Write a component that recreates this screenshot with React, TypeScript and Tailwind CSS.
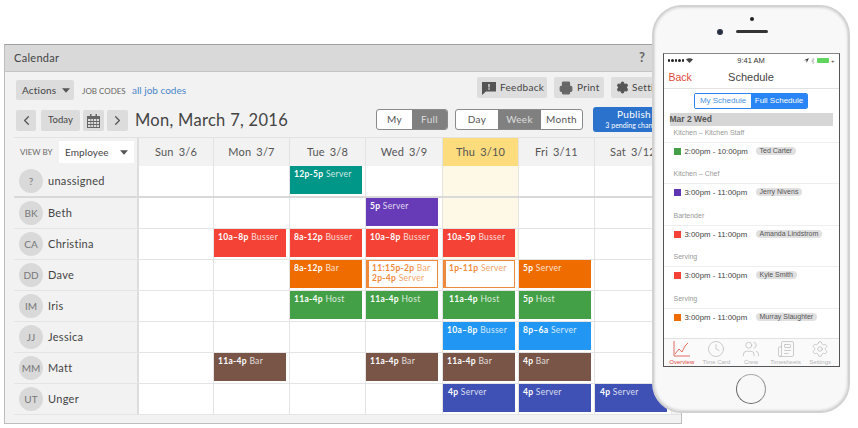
import { ChevronLeft, ChevronRight, Clock, Newspaper, Printer, Settings, Users } from "lucide-react";

type Shift = {
  col: number;
  lines: [string, string][];
  color: string;
  outline?: boolean;
  pad?: string;
};

type Row = {
  initials: string;
  name: string;
  shifts: Shift[];
};

const days = ["Sun 3/6", "Mon 3/7", "Tue 3/8", "Wed 3/9", "Thu 3/10", "Fri 3/11", "Sat 3/12"];
const gridCols = "grid grid-cols-[125px_75px_76px_76px_77px_76px_76px_77px]";

const red = "bg-[#f44336]";
const orange = "bg-[#ef6c00]";
const green = "bg-[#43a047]";
const blue = "bg-[#2196f3]";
const brown = "bg-[#795548]";
const indigo = "bg-[#3f51b5]";

const rows: Row[] = [
  {
    initials: "?",
    name: "unassigned",
    shifts: [{ col: 2, lines: [["12p-5p", "Server"]], color: "bg-[#009688]" }],
  },
  {
    initials: "BK",
    name: "Beth",
    shifts: [{ col: 3, lines: [["5p", "Server"]], color: "bg-[#673ab7]" }],
  },
  {
    initials: "CA",
    name: "Christina",
    shifts: [
      { col: 1, lines: [["10a–8p", "Busser"]], color: red },
      { col: 2, lines: [["8a-12p", "Busser"]], color: red },
      { col: 3, lines: [["10a–8p", "Busser"]], color: red },
      { col: 4, lines: [["10a-5p", "Busser"]], color: red },
    ],
  },
  {
    initials: "DD",
    name: "Dave",
    shifts: [
      { col: 2, lines: [["8a-12p", "Bar"]], color: orange },
      { col: 3, lines: [["11:15p-2p", "Bar"], ["2p-4p", "Server"]], color: orange, outline: true },
      { col: 4, lines: [["1p-11p", "Server"]], color: orange, outline: true },
      { col: 5, lines: [["5p", "Server"]], color: orange },
    ],
  },
  {
    initials: "IM",
    name: "Iris",
    shifts: [
      { col: 2, lines: [["11a-4p", "Host"]], color: green },
      { col: 3, lines: [["11a-4p", "Host"]], color: green },
      { col: 4, lines: [["11a-4p", "Host"]], color: green, pad: "pl-[6px]" },
      { col: 5, lines: [["5p", "Host"]], color: green },
    ],
  },
  {
    initials: "JJ",
    name: "Jessica",
    shifts: [
      { col: 4, lines: [["10a–8p", "Busser"]], color: blue },
      { col: 5, lines: [["8p–6a", "Server"]], color: blue },
    ],
  },
  {
    initials: "MM",
    name: "Matt",
    shifts: [
      { col: 1, lines: [["11a-4p", "Bar"]], color: brown },
      { col: 3, lines: [["11a-4p", "Bar"]], color: brown },
      { col: 4, lines: [["11a-4p", "Bar"]], color: brown },
      { col: 5, lines: [["4p", "Bar"]], color: brown },
    ],
  },
  {
    initials: "UT",
    name: "Unger",
    shifts: [
      { col: 4, lines: [["4p", "Server"]], color: indigo, pad: "pl-[5px]" },
      { col: 5, lines: [["4p", "Server"]], color: indigo },
      { col: 6, lines: [["4p", "Server"]], color: indigo, pad: "pl-[5px]" },
    ],
  },
];

const phoneShifts = [
  { group: "Kitchen – Kitchen Staff", color: "bg-[#43a047]", time: "2:00pm - 10:00pm", who: "Ted Carter" },
  { group: "Kitchen – Chef", color: "bg-[#5e35b1]", time: "3:00pm - 11:00pm", who: "Jerry Nivens" },
  { group: "Bartender", color: "bg-[#f44336]", time: "3:00pm - 11:00pm", who: "Amanda Lindstrom" },
  { group: "Serving", color: "bg-[#f44336]", time: "3:00pm - 11:00pm", who: "Kyle Smith" },
  { group: "Serving", color: "bg-[#ef6c00]", time: "3:00pm - 11:00pm", who: "Murray Slaughter" },
];

function Caret({ className }: { className: string }) {
  return (
    <svg width="8" height="5" viewBox="0 0 9 5" className={className}>
      <path d="M0 0h9L4.5 5z" fill="#555" />
    </svg>
  );
}

function ShiftBlock({ shift }: { shift: Shift }) {
  if (shift.outline) {
    return (
      <div className="h-[28px] w-[72px] border border-l-[3px] border-[#ef8a3c] bg-white pl-[3px] pt-[2px] text-[8.5px] leading-[10px] tracking-[0.3px] text-[#ef8a3c] whitespace-nowrap overflow-hidden">
        {shift.lines.map(([time, role]) => (
          <div key={time}>
            <span className="font-bold">{time}</span> <span className="opacity-80">{role}</span>
          </div>
        ))}
      </div>
    );
  }
  const [time, role] = shift.lines[0];
  return (
    <div className={`h-[28px] w-[72px] ${shift.color} ${shift.pad ?? "pl-[4px]"} pt-[3px] text-[8.5px] leading-[11px] tracking-[0.3px] text-white whitespace-nowrap overflow-hidden`}>
      <span className="font-bold">{time}</span> <span className="opacity-80">{role}</span>
    </div>
  );
}

function Segmented({ items, active, widths }: { items: string[]; active: string; widths: string[] }) {
  return (
    <div className="mt-[2px] flex h-[21px] shrink-0 overflow-hidden rounded-[3px] border border-[#8a8a8a] bg-white text-[10px] tracking-[0.3px] text-[#555]">
      {items.map((item, i) => (
        <div
          key={item}
          className={`flex items-center justify-center ${widths[i]} ${item === active ? "bg-[#808080] text-[#ddd]" : ""}`}
        >
          {item}
        </div>
      ))}
    </div>
  );
}

function Calendar() {
  return (
    <div className="ml-[4px] mt-[44px] h-[380px] w-[678px] overflow-hidden border border-[#bdbdbd] border-t-[#a0a0a0] bg-[#f2f2f2] font-['Lato',sans-serif]">
      <div className="flex h-[27px] items-center border-b border-[#c4c4c4] bg-[#d9d9d9] pl-[9px] text-[11px] tracking-[0.3px] text-[#444]">
        <span className="w-[625px] shrink-0">Calendar</span>
        <span className="text-[13px] font-bold text-[#666]">?</span>
      </div>

      <div className="flex h-[28px] items-start pl-[11px] pt-[5px] whitespace-nowrap">
        <div className="mt-[3px] flex h-[20px] w-[58px] shrink-0 items-center rounded-[2px] bg-[#dcdcdc] pl-[6px] text-[10px] tracking-[0.2px] text-[#444]">
          Actions
          <Caret className="ml-[6px]" />
        </div>
        <div className="ml-[8px] mt-[8px] w-[42px] shrink-0 text-[8px] text-[#666]">JOB CODES</div>
        <div className="ml-[8px] mt-[6px] w-[54px] shrink-0 text-[10px] text-[#4a86c8]">all job codes</div>
        <div className="ml-[291px] flex h-[21px] w-[70px] shrink-0 items-center rounded-[2px] bg-[#dedede] pl-[5px] text-[10px] tracking-[0.3px] text-[#444]">
          <svg width="14" height="14" viewBox="0 0 14 14" className="mr-[4px]">
            <path d="M0 1h14v9.500H4L0 14z" fill="#555" />
            <path d="M6.300 3h1.400v3.500H6.300zM6.300 7.300h1.400v1.400H6.300z" fill="#dedede" />
          </svg>
          Feedback
        </div>
        <div className="ml-[7px] flex h-[21px] w-[50px] shrink-0 items-center rounded-[2px] bg-[#dedede] pl-[5px] text-[10px] tracking-[0.3px] text-[#444]">
          <Printer size={14} className="mr-[4px] fill-[#666] text-[#666]" />
          Print
        </div>
        <div className="ml-[7px] flex h-[21px] w-[70px] shrink-0 items-center rounded-[2px] bg-[#dedede] pl-[5px] text-[10px] tracking-[0.3px] text-[#444]">
          <Settings size={13} className="mr-[3px] fill-[#555] text-[#555]" />
          Settings
        </div>
      </div>

      <div className="flex h-[37px] items-start pl-[11px] pt-[7px] whitespace-nowrap">
        <div className="mt-[3px] flex h-[21px] w-[20px] shrink-0 items-center justify-center rounded-[2px] bg-[#dcdcdc]">
          <ChevronLeft size={15} className="text-[#555]" />
        </div>
        <div className="ml-[5px] mt-[3px] flex h-[21px] w-[39px] shrink-0 items-center justify-center rounded-[2px] bg-[#dcdcdc] text-[9.5px] tracking-[0.1px] text-[#444]">
          Today
        </div>
        <div className="ml-[3px] mt-[3px] flex h-[21px] w-[21px] shrink-0 items-center justify-center rounded-[2px] bg-[#dcdcdc]">
          <svg width="13" height="14" viewBox="0 0 13 14">
            <path d="M0 2h13v12H0z" fill="#666" />
            <path d="M3 0h1.500v2H3zM8.500 0H10v2H8.500z" fill="#666" />
            <path d="M1 5h2.500v2H1zM4.200 5h2v2h-2zM7 5h2v2H7zM9.700 5H12v2H9.700zM1 8h2.500v2H1zM4.200 8h2v2h-2zM7 8h2v2H7zM9.700 8H12v2H9.700zM1 11h2.500v2H1zM4.200 11h2v2h-2zM7 11h2v2H7zM9.700 11H12v2H9.700z" fill="#dcdcdc" />
          </svg>
        </div>
        <div className="ml-[3px] mt-[3px] flex h-[21px] w-[21px] shrink-0 items-center justify-center rounded-[2px] bg-[#dcdcdc]">
          <ChevronRight size={15} className="text-[#555]" />
        </div>
        <div className="ml-[7px] mt-[1px] w-[241px] shrink-0 text-[16.5px] leading-[24px] tracking-[0.3px] text-[#444]">
          Mon, March 7, 2016
        </div>
        <Segmented items={["My", "Full"]} active="Full" widths={["w-[35px]", "w-[35px]"]} />
        <div className="w-[7px] shrink-0" />
        <Segmented items={["Day", "Week", "Month"]} active="Week" widths={["w-[42px]", "w-[43px]", "w-[41px]"]} />
        <div className="ml-[10px] flex h-[25px] w-[82px] shrink-0 flex-col items-center rounded-[3px] bg-[#2a72cc] pt-[1px] text-white">
          <span className="text-[10px] leading-[13px] tracking-[0.3px]">Publish</span>
          <span className="text-[7px] leading-[9px]">3 pending changes</span>
        </div>
      </div>

      <div className="ml-[9px]">
        <div className={`${gridCols} h-[29px] border-t border-[#e2e2e2]`}>
          <div className="flex items-center border-r-2 border-[#dedede] pl-[6px]">
            <span className="w-[32px] shrink-0 text-[8px] whitespace-nowrap text-[#666]">VIEW BY</span>
            <div className="ml-[7px] flex h-[22px] w-[75px] shrink-0 items-center justify-between bg-white pl-[6px] pr-[6px] text-[10px] tracking-[0.1px] text-[#444]">
              Employee
              <Caret className="" />
            </div>
          </div>
          {days.map((day) => (
            <div
              key={day}
              className={`flex items-center justify-center border-r border-[#e2e2e2] text-[11px] tracking-[0.2px] [word-spacing:2px] text-[#555] whitespace-nowrap ${day === "Thu 3/10" ? "bg-[#fddc7d] text-[#444]" : ""}`}
            >
              {day}
            </div>
          ))}
        </div>

        {rows.map((row, r) => (
          <div
            key={row.name}
            className={`${gridCols} ${r === 0 ? "h-[32px] border-b-2 border-[#d9d9d9]" : "h-[31px] border-b border-[#e4e4e4]"}`}
          >
            <div className="flex items-center border-r-2 border-[#dedede] pl-[5px]">
              <div className="flex h-[24px] w-[24px] shrink-0 items-center justify-center rounded-full bg-[#d9d9d9] text-[10px] text-[#777]">
                {row.initials}
              </div>
              <span className="ml-[5px] text-[11px] tracking-[0.3px] text-[#444]">{row.name}</span>
            </div>
            {days.map((day, c) => {
              const shift = row.shifts.find((s) => s.col === c);
              return (
                <div
                  key={day}
                  className={`border-r border-[#e4e4e4] ${c === 4 && r < 3 ? "bg-[#fef8e6]" : "bg-white"}`}
                >
                  {shift && <ShiftBlock shift={shift} />}
                </div>
              );
            })}
          </div>
        ))}
      </div>
    </div>
  );
}

function StatusBar() {
  return (
    <div className="flex h-[13px] shrink-0 items-center justify-between px-[4px] text-[7.5px] text-[#333]">
      <div className="flex w-[40px] items-center gap-[1px]">
        {[0, 1, 2, 3, 4].map((i) => (
          <span key={i} className="h-[2.500px] w-[2.500px] rounded-full bg-[#222]" />
        ))}
        <svg width="7" height="5" viewBox="0 0 7 5" className="ml-[1px]">
          <path d="M0 1.500C2 -.3 5 -.3 7 1.500L3.500 5z" fill="#444" />
        </svg>
      </div>
      <span>9:41 AM</span>
      <div className="flex w-[40px] items-center justify-end gap-[2px]">
        <svg width="5" height="5" viewBox="0 0 5 5">
          <path d="M5 0L0 2.200h2.500V5z" fill="#333" />
        </svg>
        <svg width="4" height="6" viewBox="0 0 4 6">
          <path d="M0 1.500l3 3L2 5.800V.2l1 1.300-3 3" fill="none" stroke="#aaa" strokeWidth=".6" />
        </svg>
        <span className="h-[5px] w-[12px] rounded-[1px] bg-[#5fd55f]" />
        <span className="text-[6px] leading-none">+</span>
      </div>
    </div>
  );
}

function PhoneTab({ label, active, children }: { label: string; active?: boolean; children: React.ReactNode }) {
  return (
    <div className={`flex w-[35px] flex-col items-center ${active ? "text-[#e0493a]" : "text-[#b5b5b5]"}`}>
      <div className="flex h-[19px] items-center">{children}</div>
      <span className="mt-[1px] text-[6px] leading-[7px] whitespace-nowrap">{label}</span>
    </div>
  );
}

function Phone() {
  return (
    <div className="absolute left-[652px] top-[5px] flex h-[408px] w-[198px] flex-col items-center rounded-[30px] border-2 border-[#d2d2d2] bg-[#f8f8f8] shadow-[inset_0_0_3px_#bbb] font-['Liberation_Sans',sans-serif]">
      <div className="relative h-[46px] w-full shrink-0">
        <span className="absolute left-[96px] top-[10px] h-[4px] w-[4px] rounded-full bg-[#222]" />
        <span className="absolute left-[63px] top-[22px] h-[6px] w-[6px] rounded-full bg-[#27324a]" />
        <span className="absolute left-[82px] top-[23px] h-[3px] w-[32px] rounded-full bg-[#333]" />
      </div>

      <div className="flex h-[314px] w-[177px] shrink-0 flex-col overflow-hidden border border-[#555] border-t-[#888] bg-white">
        <StatusBar />
        <div className="relative flex h-[22px] shrink-0 items-center justify-center border-b border-[#e2e2e2] text-[11px] text-[#444]">
          <span className="absolute left-[5px] text-[10.5px] text-[#e0493a]">Back</span>
          Schedule
        </div>
        <div className="mx-auto mt-[4px] flex h-[16px] w-[114px] shrink-0 overflow-hidden rounded-[2px] border border-[#2a85f5] text-[8px]">
          <div className="flex w-[56px] items-center justify-center bg-white text-[#4a90e2]">My Schedule</div>
          <div className="flex flex-1 items-center justify-center bg-[#2a85f5] text-white">Full Schedule</div>
        </div>
        <div className="mx-[6px] mt-[4px] flex h-[13px] shrink-0 items-center bg-[#d6d6d6] text-[8.5px] font-bold text-[#555]">
          Mar 2 Wed
        </div>
        <div className="flex-1 overflow-hidden">
          {phoneShifts.map((s, i) => (
            <div key={i} className="h-[41.4px]">
              <div className="flex h-[17px] items-end border-b border-[#eee] pb-[5px] pl-[10px] text-[7px] leading-[8px] text-[#999]">
                {s.group}
              </div>
              <div className="flex items-start pl-[10px] pt-[4px] text-[7.800px] text-[#444]">
                <span className="flex h-[9px] w-[8px] shrink-0 items-center">
                  <span className={`h-[7px] w-[7px] ${s.color}`} />
                </span>
                <span className="ml-[3px] w-[65px] shrink-0 whitespace-nowrap leading-[9px]">{s.time}</span>
                <span className="ml-[6px] rounded-full bg-[#e0e0e0] px-[4px] text-[7px] leading-[8px] text-[#555] whitespace-nowrap">
                  {s.who}
                </span>
              </div>
            </div>
          ))}
          <div className="pl-[10px] pt-[4px] text-[7px] leading-[8px] text-[#999]">Host/Front</div>
        </div>
        <div className="flex h-[28px] shrink-0 justify-around border-t border-[#e2e2e2] bg-[#fafafa] px-[1px]">
          <PhoneTab label="Overview" active>
            <svg width="17" height="16" viewBox="0 0 17 16" fill="none" stroke="currentColor" strokeWidth=".8">
              <path d="M1 0v15h16" />
              <path d="M2 13l4-5 3 3 3-6 3-3" />
            </svg>
          </PhoneTab>
          <PhoneTab label="Time Card">
            <Clock size={18} strokeWidth={0.9} />
          </PhoneTab>
          <PhoneTab label="Crew">
            <Users size={18} strokeWidth={0.9} />
          </PhoneTab>
          <PhoneTab label="Timesheets">
            <Newspaper size={18} strokeWidth={0.9} />
          </PhoneTab>
          <PhoneTab label="Settings">
            <Settings size={18} strokeWidth={0.9} />
          </PhoneTab>
        </div>
      </div>

      <div className="flex flex-1 items-center justify-center">
        <div className="h-[30px] w-[30px] rounded-full border-[1.5px] border-[#666] border-t-[#aaa] border-r-[#999] bg-[#f8f8f8]" />
      </div>
    </div>
  );
}

export default function App() {
  return (
    <div className="relative h-[428px] w-[858px] overflow-hidden bg-white">
      <Calendar />
      <Phone />
    </div>
  );
}
